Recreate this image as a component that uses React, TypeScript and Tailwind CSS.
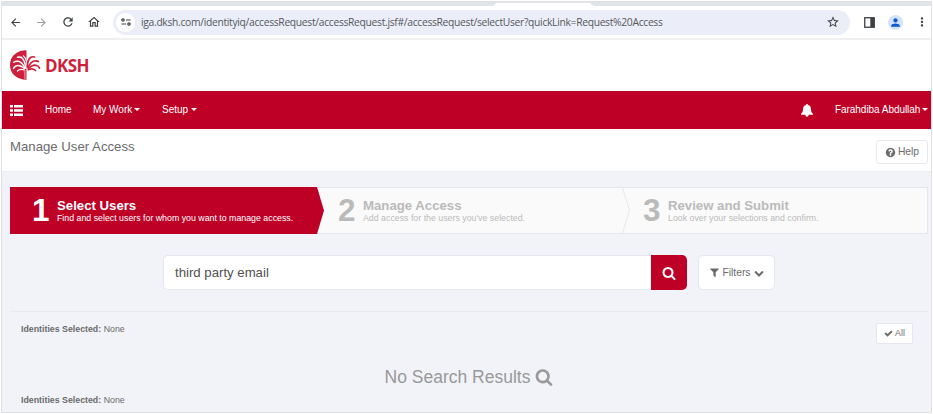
import React from "react";
import { MdArrowBack, MdArrowForward, MdRefresh, MdOutlineHome, MdStarOutline, MdPerson, MdMoreVert } from "react-icons/md";

const paths = {
  search:
    "M1216 832q0-185-131.5-316.5t-316.5-131.5-316.5 131.5-131.5 316.5 131.5 316.5 316.5 131.5 316.5-131.5 131.5-316.5zm512 832q0 52-38 90t-90 38q-54 0-90-38l-343-342q-179 124-399 124-143 0-273.5-55.5t-225-150-150-225-55.5-273.5 55.5-273.5 150-225 225-150 273.5-55.5 273.5 55.5 225 150 150 225 55.5 273.5q0 220-124 399l343 343q37 37 37 90z",
  filter:
    "M1595 295q17 41-14 70l-493 493v742q0 42-39 59-13 5-25 5-27 0-45-19l-256-256q-19-19-19-45v-486l-493-493q-31-29-14-70 17-39 59-39h1280q42 0 59 39z",
  check:
    "M1671 566q0 40-28 68l-724 724-136 136q-28 28-68 28t-68-28l-136-136-362-362q-28-28-28-68t28-68l136-136q28-28 68-28t68 28l294 295 656-657q28-28 68-28t68 28l136 136q28 28 28 68z",
  chevron:
    "M1683 808l-742 741q-19 19-45 19t-45-19l-742-741q-19-19-19-45.5t19-45.5l166-165q19-19 45-19t45 19l531 531 531-531q19-19 45-19t45 19l166 165q19 19 19 45.5t-19 45.5z",
  question:
    "M1024 1376v-192q0-14-9-23t-23-9h-192q-14 0-23 9t-9 23v192q0 14 9 23t23 9h192q14 0 23-9t9-23zm256-672q0-88-55.5-163t-138.5-116-170-41q-243 0-371 213-15 24 8 42l132 100q7 6 19 6 16 0 25-12 53-68 86-92 34-24 86-24 48 0 85.5 26t37.5 59q0 38-20 61t-68 45q-63 28-115.5 86.5t-52.5 125.5v36q0 14 9 23t23 9h192q14 0 23-9t9-23q0-19 21.5-49.5t54.5-49.5q32-18 49-28.5t46-35 44.5-48 28-60.5 12.5-81zm384 192q0 209-103 385.5t-279.5 279.5-385.5 103-385.5-103-279.5-279.5-103-385.5 103-385.5 279.5-279.5 385.5-103 385.5 103 279.5 279.5 103 385.5z",
};

function Icon({ name, className }: { name: keyof typeof paths; className: string }) {
  return (
    <svg viewBox="0 0 1792 1792" fill="currentColor" className={`shrink-0 ${className}`}>
      <path d={paths[name]} />
    </svg>
  );
}

function Caret({ className = "" }: { className?: string }) {
  return (
    <svg viewBox="0 0 6 3" className={`h-[3px] w-[6px] shrink-0 ${className}`} fill="currentColor">
      <path d="M0 0h6L3 3z" />
    </svg>
  );
}

function BrowserBar() {
  return (
    <>
      <div className="flex h-[4px] shrink-0 bg-[#dee4e9]">
        <svg className="ml-[490px] h-[4px] w-[104px]" viewBox="0 0 104 4">
          <path d="M0 4Q3 4 4 1h94q2 3 6 3z" fill="#fff" />
        </svg>
      </div>
      <div className="flex h-[32px] shrink-0 items-center bg-white text-[#3c4043]">
        <MdArrowBack className="ml-[7px] size-[13px]" />
        <MdArrowForward className="ml-[13px] size-[13px] text-[#9a9da0]" />
        <MdRefresh className="ml-[13px] size-[14px]" />
        <MdOutlineHome className="ml-[12px] size-[14px]" />
        <div className="ml-[12px] flex h-[25px] w-[737px] items-center rounded-full bg-[#ebeef8]">
          <div className="ml-[3px] flex size-[19px] items-center justify-center rounded-full bg-white">
            <svg viewBox="0 0 10 8" className="h-[8px] w-[10px]" fill="none" stroke="#3c4043" strokeWidth="1.2">
              <circle cx="2" cy="2" r="1.2" />
              <path d="M5 2h4.6M.4 6H5" />
              <circle cx="8" cy="6" r="1.2" />
            </svg>
          </div>
          <span className="ml-[6px] w-[540px] whitespace-nowrap font-['Open_Sans',sans-serif] text-[10.3px] leading-[14px] tracking-[-0.31px] text-[#55585c]">
            iga.dksh.com/identityiq/accessRequest/accessRequest.jsf#/accessRequest/selectUser?quickLink=Request%20Access
          </span>
          <MdStarOutline className="mr-[10px] ml-auto size-[14px]" />
        </div>
        <svg viewBox="0 0 11 11" className="ml-[14px] size-[11px]">
          <rect x=".75" y=".75" width="9.5" height="9.5" fill="none" stroke="#3c4043" strokeWidth="1.3" />
          <path d="M6.3 1h4v9h-4z" fill="#3c4043" />
        </svg>
        <div className="ml-[13px] flex size-[15px] items-center justify-center rounded-full bg-[#d3e3fd]">
          <MdPerson className="size-[13px] text-[#0b57d0]" />
        </div>
        <MdMoreVert className="ml-[12px] size-[14px] shrink-0" />
      </div>
      <div className="h-[2px] shrink-0 bg-[#f0f0f0]" />
    </>
  );
}

function Logo() {
  return (
    <div className="flex h-[51px] shrink-0 items-center bg-white pb-px pl-[8px]">
      <svg viewBox="0 0 31 30" className="h-[30px] w-[31px]">
        <path d="M16.500 0.300C6.500 0.300 0 6.500 0 15S6.500 29.700 16.500 29.700Z" fill="#cf1f3c" />
        <g fill="none" stroke="#fff" strokeWidth="1.5" strokeLinecap="round">
          <path d="M15.700 18Q15 10.500 11.500 7.500Q9.500 6.500 7.500 7.300" />
          <path d="M15 18Q12 12.300 8.500 11.300Q5.500 10.700 3.800 12.300" />
          <path d="M14.500 18.500Q9.500 14.500 6 16Q4 17 3.500 18.500" />
          <path d="M14.500 20Q10 18.300 7.500 21" strokeWidth="1.3" />
          <path d="M16.300 18V11Q15.700 8 13.500 6" strokeWidth="1.2" />
        </g>
        <g fill="none" stroke="#cf1f3c" strokeWidth="1.7" strokeLinecap="round">
          <path d="M17.200 17Q17.500 10 20.500 7.500Q22.300 6.300 24.500 7" />
          <path d="M18 17.500Q20.500 12 24.300 11Q27 10.500 28.300 11.500" />
          <path d="M18.300 18.500Q22.500 14.500 26 15.300Q28.500 16 29.500 18" />
          <path d="M18.300 19.700Q22.500 17.700 25.500 20.500" />
        </g>
        <path d="M14.300 20.500L14.800 29M15.900 20v9" stroke="#e8a0ac" strokeWidth=".7" />
      </svg>
      <span className="ml-[4px] font-['Open_Sans',sans-serif] text-[17px] leading-none font-bold tracking-[-0.6px] text-[#cf1f3c]">
        DKSH
      </span>
    </div>
  );
}

function NavBar() {
  return (
    <nav className="flex h-[38px] shrink-0 items-center bg-[#be0027] pb-px text-[10px] text-white">
      <svg viewBox="0 0 13 11" className="ml-[8px] mt-px h-[11px] w-[13px]" fill="#fff">
        <path d="M0 0h3v2.500H0zM4 0h9v2.500H4zM0 4.200h3v2.500H0zM4 4.200h9v2.500H4zM0 8.400h3v2.500H0zM4 8.400h9v2.500H4z" />
      </svg>
      <span className="ml-[22px] w-[48px]">Home</span>
      <span className="w-[41px] whitespace-nowrap">My Work</span>
      <Caret />
      <span className="ml-[22px] w-[29px]">Setup</span>
      <Caret />
      <svg viewBox="0 0 12 13" className="mt-px ml-auto h-[13px] w-[12px]" fill="#fff">
        <path d="M6 0q1 0 1 1Q10 1.700 10 5.500q0 3.500 2 4.500v.8H0V10q2-1 2-4.500Q2 1.700 5 1 5 0 6 0zM4.300 10.800h3.400Q7.500 12.800 6 12.800T4.300 10.800z" />
      </svg>
      <span className="ml-[22px] w-[87px] whitespace-nowrap tracking-[-0.05px]">Farahdiba Abdullah</span>
      <Caret className="mr-[3px]" />
    </nav>
  );
}

function StepText({ num, title, text }: { num: string; title: string; text: string }) {
  return (
    <>
      <span className="w-[25px] text-[31.5px] leading-[46px] font-bold tracking-[-0.5px]">{num}</span>
      <div className="flex flex-col whitespace-nowrap">
        <b className="text-[13.2px] leading-[15px]">{title}</b>
        <span className="text-[8.8px] leading-[10px]">{text}</span>
      </div>
    </>
  );
}

function Steps() {
  return (
    <div className="mr-[3px] ml-[8px] mt-[15px] flex h-[47px] shrink-0 border border-[#e4e7f0] bg-[#fafafa] text-[#bababa]">
      <div className="-my-px -ml-px flex w-[314px] items-center bg-[#be0027] pb-px pl-[22px] text-white [clip-path:polygon(0_0,307px_0,100%_50%,307px_100%,0_100%)]">
        <StepText num="1" title="Select Users" text="Find and select users for whom you want to manage access." />
      </div>
      <div className="flex w-[298px] items-center pb-px pl-[14px]">
        <StepText num="2" title="Manage Access" text="Add access for the users you've selected." />
      </div>
      <svg viewBox="0 0 8 45" className="h-[45px] w-[8px] shrink-0">
        <path d="M.5 0L7.500 22.500.5 45" fill="none" stroke="#e4e7ee" />
      </svg>
      <div className="flex items-center pb-px pl-[13px]">
        <StepText num="3" title="Review and Submit" text="Look over your selections and confirm." />
      </div>
    </div>
  );
}

function Selected() {
  return (
    <span className="text-[8.8px] leading-[10px]">
      <b>Identities Selected:</b> None
    </span>
  );
}

export default function App() {
  return (
    <div className="h-[414px] w-[933px] overflow-hidden bg-white pt-px pl-px font-['Liberation_Sans',Arial,sans-serif] text-[#6b6b6b]">
      <div className="flex h-[412px] w-[931px] flex-col overflow-hidden border border-[#e0e0e0] bg-[#f2f3f8]">
        <BrowserBar />
        <Logo />
        <NavBar />
        <header className="flex h-[43px] shrink-0 items-start justify-between border-b border-[#eeeff3] bg-white pr-[3px] pl-[8px]">
          <h1 className="mt-[10px] text-[13.2px] leading-[16px]">Manage User Access</h1>
          <button className="mt-[11px] flex h-[24px] w-[52px] items-center justify-center gap-[2px] rounded-[3px] border border-[#e7e9f0] bg-white text-[10.3px]">
            <Icon name="question" className="size-[11px]" />
            Help
          </button>
        </header>
        <Steps />
        <div className="mt-[21px] flex h-[35px] shrink-0 pl-[161px]">
          <div className="flex w-[488px] items-center rounded-l-[5px] border border-r-0 border-[#e4e7f0] bg-white pl-[11px] text-[13.2px] text-[#505050]">
            third party email
          </div>
          <button className="flex w-[36px] items-center justify-center rounded-r-[5px] bg-[#be0027] text-white">
            <Icon name="search" className="size-[14px]" />
          </button>
          <button className="ml-[11px] flex w-[77px] items-center justify-center gap-[2px] rounded-[5px] border border-[#e4e7f0] bg-white text-[10.3px]">
            <Icon name="filter" className="size-[11px]" />
            Filters
            <Icon name="chevron" className="ml-px size-[10px]" />
          </button>
        </div>
        <section className="mr-[3px] ml-[8px] mt-[21px] flex h-[101px] shrink-0 flex-col border-t border-[#e9eaef] pl-[11px]">
          <div className="flex items-start justify-between pt-[12px] pr-[15px]">
            <Selected />
            <button className="-mt-px flex h-[21px] w-[37px] items-center justify-center gap-[2px] rounded-[2px] border border-[#e4e7f0] bg-white text-[8.8px]">
              <Icon name="check" className="size-[9px]" />
              All
            </button>
          </div>
          <div className="mt-[23px] flex h-[20px] items-center justify-center gap-[5px] pr-[11px] text-[17.5px] text-[#999]">
            No Search Results
            <Icon name="search" className="size-[18px]" />
          </div>
          <div className="mt-[8px] flex">
            <Selected />
          </div>
        </section>
      </div>
    </div>
  );
}
